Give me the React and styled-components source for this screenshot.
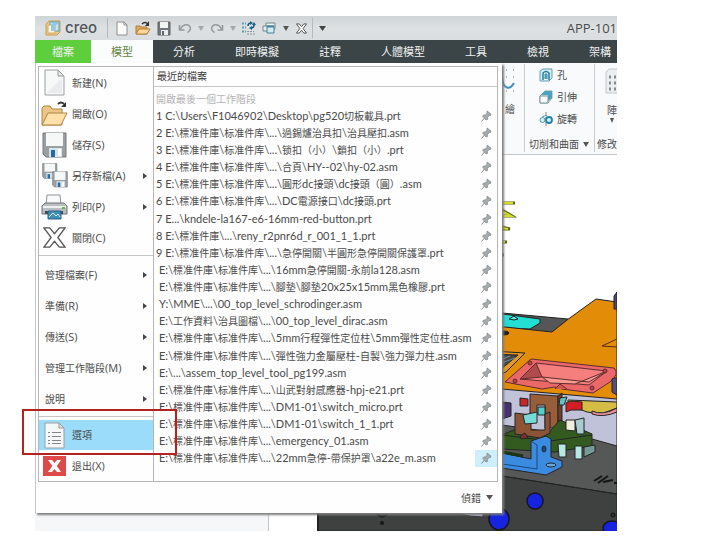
import React from "react";
import styled, { createGlobalStyle, css } from "styled-components";

const GlobalStyle = createGlobalStyle`
  *, *::before, *::after { box-sizing: border-box; }
  body {
    margin: 0;
    background: #fff;
    color: #4a4a4a;
    font-family: "Open Sans", "Noto Sans CJK TC", sans-serif;
    font-size: 11px;
    line-height: 16px;
  }
  button {
    margin: 0;
    padding: 0;
    border: 0;
    background: none;
    color: inherit;
    font: inherit;
    text-align: left;
    cursor: pointer;
  }
  svg { display: block; flex: none; }
`;

/* ---------- mixed-script text ---------- */

const Han = styled.span`
  font-size: 10px;
`;

const HAN_RUN = /([\u3000-\u9fff\uff00-\uffef]+)/;

function Mixed({ children }) {
  return children
    .split(HAN_RUN)
    .map((part, i) => (i % 2 ? <Han key={i}>{part}</Han> : part));
}

/* ---------- window ---------- */

const AppWindow = styled.main`
  margin: 16px 106px 12px 35px;
`;

const TitleBar = styled.header`
  display: flex;
  align-items: center;
  height: 24px;
  background: linear-gradient(#cfd4d8, #dde1e2 50%, #d9dddf);
`;

const Brand = styled.div`
  display: flex;
  align-items: center;
  gap: 4px;
  width: 73px;
  height: 20px;
  padding-left: 10px;
  color: #50565a;
  font-family: Inter, sans-serif;
  font-size: 15px;
  font-weight: 500;
  border-right: 1px solid #b4b9bc;
`;

const QuickTools = styled.div`
  display: flex;
  align-items: center;
  flex: 1;
  padding-left: 3px;
`;

const ToolButton = styled.button`
  display: flex;
  align-items: center;
  justify-content: center;
  width: ${(p) => (p.$narrow ? 11 : 21)}px;
  height: 20px;
`;

const ToolDivider = styled.span`
  width: 1px;
  height: 20px;
  margin-right: 4px;
  background: #b4b9bc;
`;

const DocumentTitle = styled.h1`
  margin: 0;
  font-size: 13px;
  font-weight: 400;
  line-height: 20px;
`;

const TabBar = styled.nav`
  display: flex;
  height: 23px;
  overflow: hidden;
  background: #3b4447;
`;

const Tab = styled.button`
  flex: none;
  padding: 0 20px;
  color: #eef1f1;
  text-align: center;
  white-space: nowrap;
  ${(p) => p.$kind === "file" && css`background: #5fce3c; padding: 0 17px;`}
  ${(p) => p.$kind === "active" && css`background: #fbfdfd; color: #62853f;`}
`;

const Workspace = styled.div`
  display: grid;
  grid-template-columns: minmax(0, 1fr);
`;

const Backdrop = styled.div`
  grid-area: 1 / 1;
  display: flex;
  flex-direction: column;
`;

/* ---------- ribbon ---------- */

const Ribbon = styled.section`
  display: flex;
  justify-content: flex-end;
  height: 92px;
  overflow: hidden;
  background: #f8fafb;
  border-bottom: 1px solid #c4c8ca;
`;

const RibbonGroup = styled.div`
  display: flex;
  flex-direction: column;
  flex: none;
  width: ${(p) => p.$width}px;
  height: 88px;
  margin-top: 1px;
  padding: ${(p) => p.$padding || "0 5px"};
  white-space: nowrap;
  border-left: 1px solid ${(p) => (p.$plain ? "transparent" : "#c9cccd")};
`;

const RibbonButton = styled.button`
  display: flex;
  align-items: center;
  gap: 4px;
  height: 22px;
  padding-left: 10px;
`;

const LargeButton = styled.button`
  display: flex;
  flex-direction: column;
  align-items: flex-end;
  gap: 8px;
  flex: 1;
  padding-top: 4px;
`;

const LargeLabel = styled.span`
  display: flex;
  flex-direction: column;
  align-items: center;
`;

const GroupLabel = styled.button`
  display: flex;
  align-items: center;
  gap: 4px;
  height: 16px;
  margin-top: auto;
`;

/* ---------- canvas ---------- */

const Stage = styled.div`
  display: flex;
  flex: 1;
  min-height: 375px;
`;

const ModelTree = styled.aside`
  width: 234px;
  background: #f6f7f9;
  border-right: 1px solid #c2c5c8;
`;

const Viewport = styled.section`
  display: flex;
  flex: 1;
  justify-content: flex-end;
  align-items: flex-end;
  min-width: 0;
  overflow: hidden;
`;

/* ---------- file menu ---------- */

const FileMenu = styled.section`
  grid-area: 1 / 1;
  z-index: 1;
  justify-self: start;
  width: 467px;
  max-width: 100%;
  margin-bottom: 18px;
  padding: 3px 4px 0 2px;
  background: #fefefe;
  border-left: 1px solid #c4c4c4;
  box-shadow: 2px 2px 2px #7d7d7d;
`;

const MenuBody = styled.div`
  display: grid;
  grid-template-columns: 115px minmax(0, 1fr);
  border: 1px solid #b6b6b6;
`;

const Commands = styled.ul`
  margin: 0;
  padding: 0;
  list-style: none;
  border-right: 1px solid #b6b6b6;
`;

const CommandItem = styled.li`
  position: relative;
`;

const Command = styled.button`
  display: flex;
  align-items: center;
  gap: 4px;
  width: 100%;
  height: ${(p) => (p.$selected ? 30 : 31)}px;
  padding: 0 6px 0 ${(p) => (p.$plain ? 6 : 2)}px;
  white-space: nowrap;
  background: ${(p) => (p.$selected ? "#9bdcfb" : "none")};
`;

const CommandIcon = styled.span`
  display: flex;
  justify-content: center;
  width: 27px;
`;

const CommandLabel = styled.span`
  flex: 1;
`;

const Separator = styled.li`
  height: 6px;
  padding-top: 2px;

  &::before {
    content: "";
    display: block;
    border-top: 1px solid #c6c6c6;
  }
`;

const Callout = styled.span`
  position: absolute;
  inset: -11px -24px -5px -17px;
  z-index: 2;
  border: 2px solid #b5211e;
  pointer-events: none;
`;

const Recent = styled.div`
  display: flex;
  flex-direction: column;
  font-family: Lato, "Noto Sans CJK TC", sans-serif;
`;

const RecentTitle = styled.h2`
  margin: 0;
  padding: 1px 3px 2px;
  color: #3a3a3a;
  font-size: 11px;
  font-weight: 400;
  border-bottom: 1px solid #c6c6c6;
`;

const RecentList = styled.ol`
  display: grid;
  grid-auto-rows: 1fr;
  flex: 1;
  margin: 0;
  padding: 3px 0 14px;
  list-style: none;
`;

const RecentItem = styled.li`
  display: flex;
  align-items: center;
  justify-content: space-between;
  min-height: 17px;
  padding-left: ${(p) => (p.$numbered ? 2 : 5)}px;
  color: ${(p) => (p.$muted ? "#b4b4b4" : "inherit")};
`;

const RecentFile = styled.button`
  white-space: nowrap;
`;

const PinButton = styled.button`
  display: flex;
  align-items: center;
  justify-content: center;
  width: 22px;
  height: 17px;
  background: ${(p) => (p.$hot ? "#cdeefb" : "none")};
`;

const MenuFooter = styled.footer`
  display: flex;
  justify-content: flex-end;
  align-items: center;
  height: 31px;
  padding-right: 5px;
`;

const DebugButton = styled.button`
  display: flex;
  align-items: center;
  gap: 5px;
`;

/* ---------- icons ---------- */

const Caret = ({ color = "#555", size = 7 }) => (
  <svg width={size} height="5" viewBox="0 0 8 5" preserveAspectRatio="none">
    <path d="M0 0H8L4 5Z" fill={color} />
  </svg>
);

const SubmenuArrow = () => (
  <svg width="4" height="6" viewBox="0 0 4 6">
    <path d="M0 0L4 3L0 6Z" fill="#444" />
  </svg>
);

const CreoLogo = () => (
  <svg width="16" height="16" viewBox="0 0 16 16">
    <path d="M1 4L4 1H15V12L12 15H1Z" fill="#e6c887" stroke="#cf9d4b" />
    <path d="M5 2H14V11H5Z" fill="#c7e6f3" stroke="#5a9cc0" />
    <path d="M3 5H10V13H3Z" fill="#f7f4e8" stroke="#d2ac69" />
    <path d="M6 5L8 3H14L10 6V11H6Z" fill="#8fcbe6" />
  </svg>
);

const SmallNew = () => (
  <svg width="12" height="15" viewBox="0 0 12 15">
    <path d="M1 1H8L11 4V14H1Z" fill="#fcfcfc" stroke="#8b8f92" />
    <path d="M8 1V4H11" fill="none" stroke="#8b8f92" />
  </svg>
);

const SmallOpen = () => (
  <svg width="16" height="15" viewBox="0 0 16 15">
    <path d="M1 13V5H5L6 6H12V13Z" fill="#e0a95a" stroke="#b57f37" />
    <path d="M1 13L4 8H15L12 13Z" fill="#fbd79b" stroke="#b57f37" />
    <path d="M7 3Q10 0 13 3" fill="none" stroke="#333" strokeWidth="1.6" />
    <path d="M14 0V5H10Z" fill="#333" />
  </svg>
);

const SmallSave = () => (
  <svg width="14" height="15" viewBox="0 0 14 15">
    <path d="M1 1H13V14H1Z" fill="#70767a" stroke="#5d6367" />
    <path d="M3 1H11V7H3Z" fill="#f2f4f4" />
    <path d="M4 9H11V14H4Z" fill="#e8ebec" />
    <path d="M5 10H7V14H5Z" fill="#5d6367" />
  </svg>
);

const Undo = ({ flip }) => (
  <svg width="14" height="11" viewBox="0 0 14 11">
    <g transform={flip ? "matrix(-1 0 0 1 14 0)" : undefined} fill="none" stroke="#94999c" strokeWidth="1.6">
      <path d="M1.500 2V7H6.500" />
      <path d="M2 6.500C4 3 7 1 10 2C13.500 3.500 13 8 9.500 9.500" />
    </g>
  </svg>
);

const Regenerate = () => (
  <svg width="15" height="15" viewBox="0 0 15 15">
    <g fill="none" stroke="#5d9db5">
      <path d="M1 2.500H5M1 6.500H5M1 10.500H5" strokeDasharray="2 1" strokeWidth="2" />
      <path d="M6 13H14M6 10.500H13" stroke="#8a9296" strokeDasharray="2 1" />
      <path d="M7 5Q7 2 10 2M13 4Q13 7 10 7" stroke="#1f5f82" strokeWidth="1.600" />
    </g>
    <path d="M9 0L12 2L9 4ZM11 5L8 7L11 9ZM11 4H15L13 1Z" fill="#1f5f82" />
  </svg>
);

const Windows = () => (
  <svg width="15" height="13" viewBox="0 0 15 13">
    <path d="M4 1H13V7H4Z" fill="#eef2f3" stroke="#74868d" />
    <path d="M1 4H6V9H1Z" fill="#e7edef" stroke="#74868d" />
    <path d="M5 4H12V11H5Z" fill="#d4e8ef" stroke="#478298" />
    <path d="M5 4.500H12" stroke="#478298" strokeWidth="2" />
  </svg>
);

const CloseOutline = ({ size = 11, stroke = 1 }) => (
  <svg width={size} height={size} viewBox="0 0 24 24">
    <path
      d="M1 2H7L12 8L17 2H23L15.500 12L23 22H17L12 16L7 22H1L8.500 12Z"
      fill="#fff"
      stroke="#555"
      strokeWidth={(stroke * 24) / size}
    />
  </svg>
);

const PageIcon = () => (
  <svg width="21" height="27" viewBox="0 0 21 27">
    <path d="M1 1H14L20 7V26H1Z" fill="#f7f8f8" stroke="#9b9fa1" />
    <path d="M14 1V7H20Z" fill="#dfe2e3" stroke="#9b9fa1" />
    <path d="M3 24L18 9V24Z" fill="#e9ecec" />
  </svg>
);

const FolderIcon = () => (
  <svg width="27" height="26" viewBox="0 0 27 26">
    <path d="M1 24V7L3 5H9L11 8H21V24Z" fill="#ecc588" stroke="#b38243" />
    <path d="M1 24L7 12H26L20 24Z" fill="#fde0aa" stroke="#b38243" />
    <path d="M17 3Q20 0 23 3" fill="none" stroke="#333" strokeWidth="1.800" />
    <path d="M25 1V6H20Z" fill="#333" />
  </svg>
);

const Disk = ({ x = 0, y = 0, s = 1 }) => (
  <g transform={`translate(${x} ${y}) scale(${s})`}>
    <path d="M1 1H24V25H4L1 22Z" fill="#9a9fa2" stroke="#74797c" />
    <path d="M4 1H21V14H4Z" fill="#f6f8f8" />
    <path d="M7 16H20V25H7Z" fill="#d5e3ec" />
    <path d="M9 18H13V25H9Z" fill="#276c9d" />
    <path d="M16 17H19V24H16Z" fill="#fff" />
  </g>
);

const SaveIcon = () => (
  <svg width="25" height="26" viewBox="0 0 25 26"><Disk /></svg>
);

const SaveAsIcon = () => (
  <svg width="26" height="25" viewBox="0 0 26 25">
    <Disk s={0.62} />
    <Disk x={10} y={8} s={0.64} />
  </svg>
);

const PrintIcon = () => (
  <svg width="27" height="26" viewBox="0 0 27 26">
    <path d="M6 1H19L20 11H5Z" fill="#f8fafa" stroke="#8e9497" />
    <path d="M1 12L4 9H23L26 12V20H1Z" fill="#b9bec2" stroke="#6d7377" />
    <path d="M2 13H25" stroke="#eef0f1" strokeWidth="2" />
    <path d="M4 17H22V20H4Z" fill="#454b4f" />
    <path d="M7 17H20V25H7Z" fill="#3f8eb8" stroke="#286486" />
    <path d="M8 23L12 19L15 22L17 20L19 23" fill="none" stroke="#d9eef6" />
    <path d="M21 13H24V15H21Z" fill="#67b345" />
  </svg>
);

const OptionsIcon = () => (
  <svg width="21" height="27" viewBox="0 0 21 27">
    <path d="M1 1H15L20 6V26H1Z" fill="#f6f8f8" stroke="#9b9fa1" />
    <path d="M15 1V6H20Z" fill="#dde0e1" stroke="#9b9fa1" />
    <path d="M4 10.500H6M8 10.500H17M4 14.500H6M8 14.500H17M4 18.500H6M8 18.500H17M4 21.500H6M8 21.500H17" stroke="#7f878b" />
  </svg>
);

const ExitIcon = () => (
  <svg width="23" height="20" viewBox="0 0 23 20">
    <path d="M0 0H23V20H0Z" fill="#dd4a49" />
    <path d="M5 4H9L11.500 7L14 4H18L13.800 10L18 16H14L11.500 13L9 16H5L9.300 10Z" fill="#fff" />
  </svg>
);

const Pin = () => (
  <svg width="11" height="12" viewBox="0 0 11 12">
    <path d="M6 1L10 4L9.500 5.500L8 5.500L6.500 7.500L6.500 9.500L5 10L1.500 6L3 5L5 4.800L6 3Z" fill="#a6abae" stroke="#82878a" strokeWidth="0.700" />
    <path d="M3.500 8L0.500 11.500" stroke="#82878a" />
  </svg>
);

const HoleIcon = () => (
  <svg width="14" height="14" viewBox="0 0 14 14">
    <path d="M1 3L4 1H13V10L10 13H1Z" fill="#d9edf3" stroke="#5f9fb4" />
    <path d="M4 12V5Q7 2 10 5V12" fill="#f6fbfc" stroke="#207fa0" strokeWidth="1.500" />
    <path d="M6 11V6H8V11" fill="#67b4cc" stroke="#2d8aa9" />
  </svg>
);

const ExtrudeIcon = () => (
  <svg width="14" height="14" viewBox="0 0 14 14">
    <path d="M1 6L6 1H13V8L9 13H1Z" fill="#e5eff2" stroke="#8ba6ae" />
    <path d="M6 1H13V8L9 11V5H2Z" fill="#4ba3c0" />
    <path d="M1 6H9V13H1Z" fill="#fafcfc" stroke="#7b929a" />
  </svg>
);

const RevolveIcon = () => (
  <svg width="14" height="14" viewBox="0 0 14 14">
    <path d="M7 0V14" stroke="#7a8a90" strokeDasharray="4 1" />
    <circle cx="3.500" cy="8" r="2.500" fill="#d8ecf3" stroke="#5499b0" />
    <circle cx="10" cy="8" r="3" fill="#d8ecf3" stroke="#2382a2" strokeWidth="1.800" />
    <path d="M3 5Q7 2 10 5" fill="none" stroke="#5499b0" />
  </svg>
);

const SketchIcon = () => (
  <svg width="14" height="25" viewBox="0 0 14 25">
    <path
      d="M5 2H6M12 2H13M5 9H6M12 9H13M12 16H13M5 23H6M12 23H13"
      stroke="#5f7a8c"
    />
    <path d="M1 3V9C2 22 9 22 13 15" fill="none" stroke="#3a93c0" strokeWidth="2" />
  </svg>
);

const PatternIcon = () => (
  <svg width="12" height="26" viewBox="0 0 12 26">
    <path d="M13 1H4L1 4V25H13Z" fill="#eceff0" stroke="#c2c7c9" />
    <path d="M4 9H6M9 9H11M4 15H6M9 15H11M4 21H6M9 21H11" stroke="#838a8e" strokeWidth="3" />
  </svg>
);

/* Assembly rendering: springs, jig plates and base. */
const Assembly = () => (
  <svg width="300" height="375" viewBox="317 155 300 375" role="img" aria-label="3D">
    <g fill="none">
      <path d="M502 202H515M502 209L512 215H502M502 226L510 228H502M502 241H507M502 254H504" stroke="#5d6413" strokeWidth="3" />
      <path d="M502 202H513M502 210L511 215H502M502 227L508 228M502 241H505" stroke="#d6df25" strokeWidth="2" />
    </g>
    <g stroke="#222" strokeWidth="1" strokeLinejoin="round">
      <path d="M317 310L502 312L568 318L560 332H317Z" fill="#565656" />
      <path d="M480 312L503 313L540 318V322L530 328L480 326Z" fill="#22ded3" />
      <path d="M509 318L514 315L518 318L514 319Z" fill="#58efe8" />
      <path d="M317 375L502 383L617 396V530H317Z" fill="#bfc2d8" />
      <path d="M317 325L505 326L552 331L567 319L596 298L617 301V398L317 372Z" fill="#e38c08" />
      <path d="M617 291L614 295V308H617Z" fill="#4e4972" />
      <path d="M602 345L617 338V346Z" fill="#e38c08" stroke="#5b2a10" />
      <ellipse cx="504" cy="332" rx="5" ry="2" fill="#292014" />
      <path d="M490 350L525 352L506 371L490 377Z" fill="#e79a20" />
      <path d="M490 353L518 354L500 369L490 371Z" fill="#4d4640" />
      <path d="M500 359L510 355M499 363L515 357" fill="none" stroke="#6595af" />
    </g>
    <g stroke="#612c30" strokeWidth="1" strokeLinejoin="round">
      <path d="M505 381L531 358L614 367Q620 373 610 381L593 392L562 388L555 386L542 388Z" fill="#ea6868" />
      <path d="M520 378L536 362L607 370L589 384Z" fill="#f57f7c" />
      <path d="M520 378L536 362L542 376Z" fill="#b04a4d" />
      <path d="M542 376L589 381L607 370L575 383L550 382Z" fill="#f79b92" />
      <circle cx="530" cy="362" r="2" fill="#b94345" />
      <circle cx="605" cy="370" r="2" fill="#b94345" />
      <circle cx="515" cy="380" r="2" fill="#b94345" />
      <circle cx="592" cy="387" r="2" fill="#b94345" />
      <path d="M555 388L560 383L567 388" fill="#d45757" />
    </g>
    <g stroke="#252525" strokeWidth="1" strokeLinejoin="round">
      <path d="M614 377H617V394L612 391V378Z" fill="#555079" />
      <path d="M568 399L617 401V407L601 413L587 411L568 404Z" fill="#d5bd45" />
      <path d="M592 410Q603 415 617 407V411Q603 417 592 413Z" fill="#e88fa0" />
      <path d="M566 402L571 400L582 401V409H571L566 411Z" fill="#d51c23" />
      <path d="M520 397L528 398V405H520Z" fill="#c9262a" />
      <path d="M502 401L511 402V415L502 418Z" fill="#473070" />
      <path d="M617 445L585 436L502 424V530H617Z" fill="#565757" />
      <path d="M317 464L502 475L617 493V530H317Z" fill="#3f4040" />
      <path d="M317 464L502 475L617 493" fill="none" />
      <path d="M530 393L558 395V427H545V404H537V414H530Z" fill="#985d39" />
      <path d="M558 395L562 392V420L558 424Z" fill="#6c3f28" />
      <path d="M538 406H545V414H538Z" fill="#50cfcb" />
      <path d="M560 397L567 396L564 404H559Z" fill="#67c3c2" />
      <path d="M502 434L514 429L549 431L560 419L592 433V445L555 451L502 448Z" fill="#335b20" />
      <path d="M502 434L550 440L592 434" fill="none" />
      <path d="M515 412L531 414V429H545V413L550 411V432L540 437L515 433Z" fill="#8c5434" />
      <path d="M523 414L537 411V422L525 423Z" fill="#76dbd8" />
      <path d="M566 419H575V430L566 429Z" fill="#f0efdd" />
      <path d="M575 419L584 417V433H577Z" fill="#aacbd1" />
      <path d="M558 443H566V456H559Z" fill="#b6e9e4" />
      <path d="M575 445H582V458H575Z" fill="#b6e9e4" />
      <path d="M584 446L595 444V451L584 456Z" fill="#779a98" />
      <path d="M502 452L531 458V440L546 435L551 438V456L562 460V466L546 474L502 467Z" fill="#3b8be0" />
      <path d="M531 440L537 444V468L502 463" fill="none" stroke="#174a7f" />
      <ellipse cx="551" cy="464" rx="5" ry="2" fill="#66a6dd" />
      <path d="M520 435L525 432L528 437L521 438Z" fill="#7e2e34" />
      <path d="M502 451L523 455" fill="none" stroke="#1b3516" strokeWidth="3" />
      <ellipse cx="544" cy="448" rx="2" ry="3" fill="#194f88" />
    </g>
    <path d="M594 480L602 475M598 482L608 475M603 481L613 479M614 482H617" fill="none" stroke="#151515" strokeWidth="2" />
    <g fill="#1724df" stroke="#151525" strokeWidth="1.500">
      <ellipse cx="499" cy="518" rx="10" ry="11" />
      <ellipse cx="535" cy="500" rx="8" ry="8" />
      <ellipse cx="612" cy="527" rx="9" ry="7" />
    </g>
    <circle cx="613" cy="514" r="2" fill="#333" stroke="#111" />
    <circle cx="382" cy="510" r="6" fill="#333" stroke="#161616" />
    <circle cx="382" cy="522" r="2" fill="#161616" />
    <path d="M448 510H483V516L470 515Z" fill="#aeb0c5" stroke="#333" />
    <path d="M318 512V530" stroke="#222" strokeWidth="2" />
  </svg>
);

/* ---------- data ---------- */

const TABS = [
  { label: "檔案", kind: "file" },
  { label: "模型", kind: "active" },
  { label: "分析" },
  { label: "即時模擬" },
  { label: "註釋" },
  { label: "人體模型" },
  { label: "工具" },
  { label: "檢視" },
  { label: "架構" },
];

const FILE_COMMANDS = [
  { label: "新建(N)", icon: <PageIcon /> },
  { label: "開啟(O)", icon: <FolderIcon /> },
  { label: "儲存(S)", icon: <SaveIcon /> },
  { label: "另存新檔(A)", icon: <SaveAsIcon />, submenu: true },
  { label: "列印(P)", icon: <PrintIcon />, submenu: true },
  { label: "關閉(C)", icon: <CloseOutline size={23} stroke={1.3} /> },
];

const MANAGE_COMMANDS = ["管理檔案(F)", "準備(R)", "傳送(S)", "管理工作階段(M)", "說明"];

const STD = "E:\\標准件庫\\标准件库\\...\\";

const RECENT_FILES = [
  "C:\\Users\\F1046902\\Desktop\\pg520切板載具.prt",
  STD + "過錫爐治具扣\\治具壓扣.asm",
  STD + "锁扣（小）\\鎖扣（小）.prt",
  STD + "合頁\\HY--02\\hy-02.asm",
  STD + "圓形dc接頭\\dc接頭（圓）.asm",
  STD + "DC電源接口\\dc接頭.prt",
  "E...\\kndele-la167-e6-16mm-red-button.prt",
  "E:\\標准件庫\\...\\reny_r2pnr6d_r_001_1_1.prt",
  STD + "急停開關\\半圓形急停開關保護罩.prt",
  STD + "16mm急停開關-永前la128.asm",
  STD + "腳墊\\腳墊20x25x15mm黑色橡膠.prt",
  "Y:\\MME\\...\\00_top_level_schrodinger.asm",
  "E:\\工作資料\\治具圖檔\\...\\00_top_level_dirac.asm",
  STD + "5mm行程彈性定位柱\\5mm彈性定位柱.asm",
  STD + "彈性強力金屬壓柱-自製\\強力彈力柱.asm",
  "E:\\...\\assem_top_level_tool_pg199.asm",
  STD + "山武對射感應器-hpj-e21.prt",
  STD + "DM1-01\\switch_micro.prt",
  STD + "DM1-01\\switch_1_1.prt",
  STD + "emergency_01.asm",
  STD + "22mm急停-帶保护罩\\a22e_m.asm",
];

/* ---------- composition ---------- */

function MenuCommand({ label, icon, submenu, selected, children }) {
  return (
    <CommandItem>
      <Command $plain={!icon} $selected={selected}>
        {icon && <CommandIcon>{icon}</CommandIcon>}
        <CommandLabel><Mixed>{label}</Mixed></CommandLabel>
        {submenu && <SubmenuArrow />}
      </Command>
      {children}
    </CommandItem>
  );
}

export default function App() {
  return (
    <>
      <GlobalStyle />
      <AppWindow>
        <TitleBar>
          <Brand><CreoLogo />creo</Brand>
          <QuickTools>
            <ToolButton aria-label="新建"><SmallNew /></ToolButton>
            <ToolButton aria-label="開啟"><SmallOpen /></ToolButton>
            <ToolButton aria-label="儲存"><SmallSave /></ToolButton>
            <ToolButton aria-label="復原"><Undo /></ToolButton>
            <ToolButton $narrow aria-label="復原清單"><Caret color="#a3a8aa" size={6} /></ToolButton>
            <ToolButton aria-label="重做"><Undo flip /></ToolButton>
            <ToolButton $narrow aria-label="重做清單"><Caret color="#a3a8aa" size={6} /></ToolButton>
            <ToolButton aria-label="重新產生"><Regenerate /></ToolButton>
            <ToolButton aria-label="視窗"><Windows /></ToolButton>
            <ToolButton $narrow aria-label="視窗清單"><Caret size={6} /></ToolButton>
            <ToolButton aria-label="關閉"><CloseOutline /></ToolButton>
            <ToolDivider />
            <ToolButton $narrow aria-label="自訂"><Caret color="#444" /></ToolButton>
          </QuickTools>
          <DocumentTitle>APP-101</DocumentTitle>
        </TitleBar>

        <TabBar>
          {TABS.map((t) => (
            <Tab key={t.label} $kind={t.kind}>{t.label}</Tab>
          ))}
        </TabBar>

        <Workspace>
          <Backdrop>
            <Ribbon>
              <RibbonGroup $width={34} $padding="0 9px" $plain>
                <LargeButton aria-label="草繪">
                  <SketchIcon />
                  <LargeLabel><Mixed>繪</Mixed></LargeLabel>
                </LargeButton>
              </RibbonGroup>
              <RibbonGroup $width={70} $padding="0 4px">
                <RibbonButton><HoleIcon /><Mixed>孔</Mixed></RibbonButton>
                <RibbonButton><ExtrudeIcon /><Mixed>引伸</Mixed></RibbonButton>
                <RibbonButton><RevolveIcon /><Mixed>旋轉</Mixed></RibbonButton>
                <GroupLabel><Mixed>切削和曲面</Mixed><Caret size={6} /></GroupLabel>
              </RibbonGroup>
              <RibbonGroup $width={23} $padding="0 0 0 2px">
                <LargeButton>
                  <PatternIcon />
                  <LargeLabel><Mixed>陣</Mixed><Caret size={4} /></LargeLabel>
                </LargeButton>
                <GroupLabel><Mixed>修改</Mixed></GroupLabel>
              </RibbonGroup>
            </Ribbon>
            <Stage>
              <ModelTree />
              <Viewport><Assembly /></Viewport>
            </Stage>
          </Backdrop>

          <FileMenu>
            <MenuBody>
              <Commands>
                {FILE_COMMANDS.map((c) => <MenuCommand key={c.label} {...c} />)}
                <Separator />
                {MANAGE_COMMANDS.map((label) => (
                  <MenuCommand key={label} label={label} submenu />
                ))}
                <Separator />
                <MenuCommand label="選項" icon={<OptionsIcon />} selected>
                  <Callout />
                </MenuCommand>
                <MenuCommand label="退出(X)" icon={<ExitIcon />} />
              </Commands>
              <Recent>
                <RecentTitle><Mixed>最近的檔案</Mixed></RecentTitle>
                <RecentList>
                  <RecentItem $numbered $muted>
                    <RecentFile><Mixed>開啟最後一個工作階段</Mixed></RecentFile>
                  </RecentItem>
                  {RECENT_FILES.map((path, i) => (
                    <RecentItem key={path} $numbered={i < 9}>
                      <RecentFile><Mixed>{i < 9 ? `${i + 1} ${path}` : path}</Mixed></RecentFile>
                      <PinButton aria-label="釘選" $hot={i === RECENT_FILES.length - 1}><Pin /></PinButton>
                    </RecentItem>
                  ))}
                </RecentList>
              </Recent>
            </MenuBody>
            <MenuFooter>
              <DebugButton><Mixed>偵錯</Mixed><Caret size={7} /></DebugButton>
            </MenuFooter>
          </FileMenu>
        </Workspace>
      </AppWindow>
    </>
  );
}
